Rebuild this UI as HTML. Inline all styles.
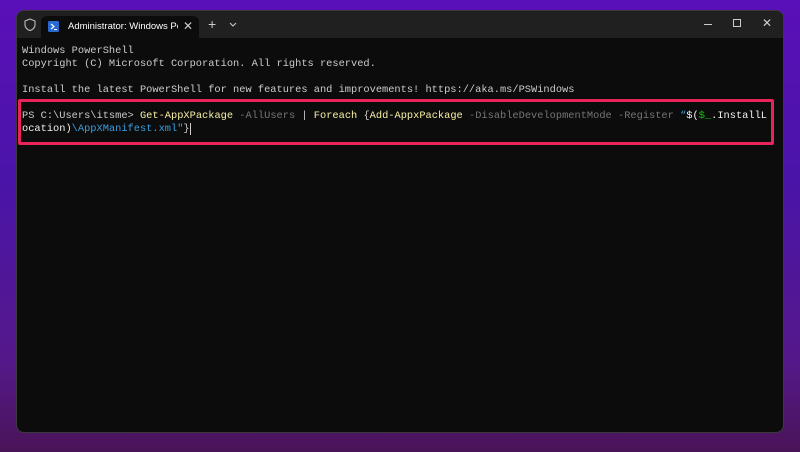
<!DOCTYPE html>
<html><head><style>
html,body{margin:0;padding:0;width:800px;height:452px;overflow:hidden;
background:linear-gradient(180deg,#5a10b8 0%,#4a14a8 40%,#55188a 80%,#4a1458 100%);font-family:"Liberation Sans",sans-serif;}
.win{position:absolute;left:17px;top:11px;width:766px;height:421px;background:#0c0c0c;border-radius:7px;overflow:hidden;box-shadow:0 0 0 1px #3a3a3a;}
.bar{position:absolute;left:0;top:0;width:100%;height:27px;background:#202020;}
.tab{position:absolute;left:24px;top:5px;width:158px;height:22px;background:#0c0c0c;border-radius:6px 6px 0 0;}
.tab .t{position:absolute;left:27px;top:5px;font-size:9.5px;color:#fff;white-space:nowrap;width:110px;overflow:hidden;}
.term{position:absolute;left:5px;top:34px;font-family:"Liberation Mono",monospace;font-size:10.35px;line-height:13px;color:#cccccc;white-space:pre;}
.y{color:#f9f1a5}.g{color:#767676}.b{color:#3b9fe0}.gr{color:#16c60c}.w{color:#f2f2f2}
.box{position:absolute;left:18px;top:99px;width:750px;height:40px;border:3px solid #e8245a;border-radius:2px;}
.ic{position:absolute;color:#ccc;font-size:11px;}
</style></head><body>
<div class="win">
 <div class="bar">
  <svg style="position:absolute;left:7px;top:7px" width="12" height="13" viewBox="0 0 12 13"><path d="M6 1 L11 3 V7 C11 10 8 12 6 12.5 C4 12 1 10 1 7 V3 Z" fill="none" stroke="#bbb" stroke-width="1.1"/></svg>
  <div class="tab">
   <svg style="position:absolute;left:7px;top:5px" width="11" height="11"><rect width="11" height="11" rx="1.5" fill="#2a6ad0"/><path d="M3 3 L6 5.5 L3 8" stroke="#fff" stroke-width="1.2" fill="none"/><path d="M6 8.5 H9" stroke="#fff" stroke-width="1"/></svg>
   <div class="t">Administrator: Windows Powe</div>
   <div class="ic" style="left:142px;top:3px;font-size:12px">✕</div>
  </div>
  <div class="ic" style="left:191px;top:6px;font-size:14px;line-height:14px">+</div>
  <svg style="position:absolute;left:212px;top:11px" width="8" height="5"><path d="M1 1 L4 4 L7 1" stroke="#ccc" fill="none"/></svg>
  <div style="position:absolute;left:687px;top:13px;width:8px;height:1px;background:#ccc"></div>
  <div style="position:absolute;left:716px;top:8px;width:6px;height:6px;border:1px solid #ccc"></div>
  <div class="ic" style="left:745px;top:5px;font-size:12px">✕</div>
 </div>
 <div class="term">Windows PowerShell
Copyright (C) Microsoft Corporation. All rights reserved.

Install the latest PowerShell for new features and improvements! https://aka.ms/PSWindows

PS C:\Users\itsme&gt; <span class="y">Get-AppXPackage</span> <span class="g">-AllUsers</span> | <span class="y">Foreach</span> {<span class="y">Add-AppxPackage</span> <span class="g">-DisableDevelopmentMode</span> <span class="g">-Register</span> <span class="b">“</span><span class="w">$(</span><span class="gr">$_</span><span class="w">.InstallL
ocation)</span><span class="b">\AppXManifest.xml"</span>}<span style="border-left:1px solid #ccc"></span></div>
</div>
<div class="box"></div>
</body></html>
